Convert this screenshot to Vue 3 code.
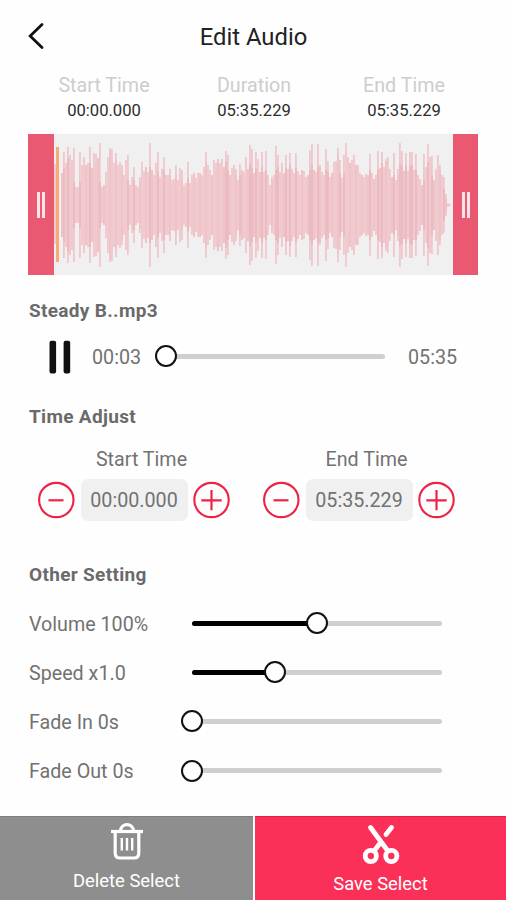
<script setup>
import { ref, computed } from 'vue'

const times = [
  { label: 'Start Time', value: '00:00.000' },
  { label: 'Duration', value: '05:35.229' },
  { label: 'End Time', value: '05:35.229' }
]

const adjusters = ref([
  { label: 'Start Time', value: '00:00.000' },
  { label: 'End Time', value: '05:35.229' }
])

const settings = ref([
  { label: 'Volume 100%', percent: 50 },
  { label: 'Speed x1.0', percent: 33.3 },
  { label: 'Fade In 0s', percent: 0 },
  { label: 'Fade Out 0s', percent: 0 }
])

// half height of every waveform bar
const peaks = [
  32, 53, 42, 58, 50, 45, 57, 18, 18, 53, 40, 48, 40, 42, 58, 37, 52, 51, 47, 62,
  18, 20, 33, 48, 57, 56, 42, 52, 40, 43, 40, 30, 45, 50, 20, 28, 38, 20, 18, 28,
  43, 34, 38, 33, 62, 35, 30, 42, 53, 28, 36, 48, 30, 30, 36, 25, 26, 40, 25,
  37, 35, 20, 22, 43, 22, 30, 32, 27, 32, 32, 30, 38, 53, 40, 35, 30, 45, 42, 46,
  42, 46, 38, 54, 50, 30, 37, 40, 36, 25, 41, 35, 33, 48, 36, 60, 56, 32, 53, 46,
  33, 53, 33, 54, 30, 20, 28, 30, 59, 50, 33, 42, 32, 50, 36, 52, 36, 32, 52, 34,
  30, 35, 34, 28, 30, 55, 61, 35, 33, 61, 40, 33, 30, 56, 44,
  28, 32, 43, 44, 57, 45, 27, 50, 62, 48, 42, 45, 50, 40, 40, 32, 30, 28, 31, 30,
  51, 32, 26, 30, 54, 37, 53, 38, 46, 48, 36, 28, 52, 25, 36, 62, 54, 34, 52, 34,
  53, 53, 35, 51, 30, 26, 20, 51, 38, 61, 48, 49, 25, 36, 50, 40, 30, 28, 11, 2, 1
]

// each bar has a solid body and a thinner spike that sticks out of it
const bars = computed(() =>
  peaks.map((peak, i) => {
    const low = Math.min(peak, peaks[i - 1] ?? peak, peaks[i + 1] ?? peak)
    const body = Math.min(peak, low + 5)
    const tone = peak - low > 15 ? 'strong' : i % 3 === 0 ? 'mid' : 'soft'
    return { x: 33 + i * 2, peak, body, tone }
  })
)
</script>

<template>
  <div class="page">
    <header class="header">
      <svg class="back" width="16" height="28" viewBox="0 0 16 28">
        <path d="M14 2.5 L2.2 14 L14 25.5" />
      </svg>
      <h1>Edit Audio</h1>
    </header>

    <section class="times">
      <div v-for="item in times" :key="item.label" class="time">
        <span class="time-label">{{ item.label }}</span>
        <span class="time-value">{{ item.value }}</span>
      </div>
    </section>

    <!-- waveform -->
    <section class="wave">
      <div class="handle"><i></i><i></i></div>
      <svg class="wave-bars" width="399" height="141" viewBox="26 0 399 141">
        <rect class="soft" x="26" y="30" width="2" height="80" />
        <g v-for="(bar, i) in bars" :key="i">
          <rect
            class="spike"
            :x="bar.x + 0.2"
            :y="71 - bar.peak"
            width="1.5"
            :height="bar.peak * 2"
          />
          <rect
            :class="bar.tone"
            :x="bar.x"
            :y="71 - bar.body"
            width="2"
            :height="bar.body * 2"
          />
        </g>
        <rect class="cursor" x="28" y="13" width="3" height="115" />
      </svg>
      <div class="handle right"><i></i><i></i></div>
    </section>

    <h2 class="file-name">Steady B..mp3</h2>

    <section class="player">
      <svg class="pause" width="22" height="34" viewBox="0 0 22 34">
        <rect x="0.5" y="0.8" width="6.6" height="32.6" rx="2" />
        <rect x="14.6" y="0.8" width="6.6" height="32.6" rx="2" />
      </svg>
      <span class="current">00:03</span>
      <div class="slider">
        <div class="knob"></div>
      </div>
      <span class="total">05:35</span>
    </section>

    <h2 class="adjust-title">Time Adjust</h2>

    <section class="adjusters">
      <div v-for="item in adjusters" :key="item.label" class="adjuster">
        <div class="adjust-label">{{ item.label }}</div>
        <div class="adjust-row">
          <svg class="round" width="38" height="38" viewBox="0 0 38 38">
            <circle cx="19.3" cy="19" r="17.2" />
            <path d="M11.5 19.3 H26.5" />
          </svg>
          <div class="adjust-value">{{ item.value }}</div>
          <svg class="round" width="38" height="38" viewBox="0 0 38 38">
            <circle cx="18.5" cy="19" r="17.2" />
            <path d="M8.3 19.3 H28.7 M18.5 9 V29.3" />
          </svg>
        </div>
      </div>
    </section>

    <h2 class="other-title">Other Setting</h2>

    <section class="settings">
      <div v-for="item in settings" :key="item.label" class="setting">
        <span class="setting-label">{{ item.label }}</span>
        <div class="slider">
          <div class="fill" :style="{ width: item.percent + '%' }"></div>
          <div class="knob" :style="{ left: item.percent + '%' }"></div>
        </div>
      </div>
    </section>

    <footer class="footer">
      <button class="action delete">
        <svg width="34" height="38" viewBox="0 0 34 38">
          <path d="M1 8.5 H33" />
          <path d="M10.5 8 C11 -0.5 23 -0.5 23.5 8" />
          <path d="M5.2 9 V30 Q5.2 35 10 35 H24 Q28.8 35 28.8 30 V9" />
          <path class="thin" d="M11.8 15 V27.5 M17 15 V27.5 M22.2 15 V27.5" />
        </svg>
        <span>Delete Select</span>
      </button>
      <button class="action save">
        <svg width="38" height="42" viewBox="0 0 38 42">
          <path d="M8.5 3.5 L25.5 26.5" />
          <path d="M29.5 3.5 L24 10.5" />
          <path d="M17 20.5 L12.5 26.5" />
          <circle cx="8.8" cy="32" r="5.6" />
          <circle cx="29.3" cy="32" r="5.6" />
        </svg>
        <span>Save Select</span>
      </button>
    </footer>
  </div>
</template>

<style>
body {
  margin: 0;
  background: #fefefe;
}
</style>

<style scoped>
.page {
  width: 506px;
  height: 900px;
  display: flex;
  flex-direction: column;
  overflow: hidden;
  background: #fefefe;
  color: #727272;
  font-family: Roboto, "Liberation Sans", sans-serif;
  font-size: 19.7px;
}

.header {
  height: 74px;
  display: grid;
  grid-template-columns: 60px 1fr 60px;
  align-items: center;
  box-sizing: border-box;
}

.back {
  margin-left: 28px;
  margin-top: -2px;
}

.back path {
  fill: none;
  stroke: #111;
  stroke-width: 2.8;
  stroke-linecap: round;
}

.header h1 {
  margin: 0;
  padding-left: 1px;
  color: #222;
  font-size: 23.8px;
  font-weight: 400;
  line-height: 28px;
  text-align: center;
}

.times {
  display: grid;
  grid-template-columns: repeat(3, 150px);
  margin-left: 29px;
  height: 60px;
}

.time {
  display: flex;
  flex-direction: column;
  align-items: center;
}

.time-label {
  line-height: 24px;
  color: #cdcdcd;
}

.time-value {
  font-size: 16.6px;
  line-height: 25px;
  color: #2c2c2c;
}

/* waveform */
.wave {
  display: flex;
  width: 450px;
  height: 141px;
  margin-left: 28px;
  background: #f0f0f0;
}

.handle {
  width: 26px;
  display: flex;
  align-items: center;
  justify-content: center;
  gap: 2px;
  background: #e95a72;
}

.handle.right {
  width: 25px;
}

.handle i {
  width: 3px;
  height: 26px;
  background: #fbe3e7;
}

.spike {
  fill: #efbfc6;
}

.soft {
  fill: #f0cace;
}

.mid {
  fill: #eec4c9;
}

.strong {
  fill: #ecbac1;
}

.cursor {
  fill: #f8ab78;
}

h2 {
  margin: 0 0 0 29px;
  color: #6a6a6a;
  font-size: 19px;
  font-weight: 700;
  letter-spacing: 0.32px;
  line-height: 24px;
}

.file-name {
  margin-top: 24px;
}

.player {
  display: flex;
  align-items: center;
  height: 40px;
  margin-top: 14px;
  padding-left: 49px;
}

.pause {
  fill: #111;
}

.current {
  width: 74px;
  margin-left: 21px;
}

.player .slider {
  width: 219px;
}

.total {
  margin-left: 23px;
}

.slider {
  position: relative;
  width: 250px;
  height: 5px;
  border-radius: 3px;
  background: #cfcfcf;
}

.player .slider {
  top: -1px;
}

.setting .slider {
  top: -0.5px;
}

.fill {
  height: 5px;
  border-radius: 3px;
  background: #000;
}

.knob {
  position: absolute;
  left: 0;
  top: 50%;
  width: 22px;
  height: 22px;
  box-sizing: border-box;
  border: 2.4px solid #111;
  border-radius: 50%;
  background: #fff;
  transform: translate(-50%, -50%);
}

.adjust-title {
  margin-top: 28px;
}

.adjusters {
  display: flex;
  gap: 31px;
  margin: 19px 0 0 37px;
}

.adjuster {
  width: 194px;
}

.adjust-label {
  padding-left: 15px;
  line-height: 24px;
  text-align: center;
}

.adjust-row {
  display: flex;
  align-items: center;
  justify-content: space-between;
  margin-top: 7px;
}

.adjust-value {
  width: 107px;
  height: 42px;
  border-radius: 7px;
  background: #f0f0f0;
  line-height: 43px;
  text-align: center;
}

.round {
  fill: none;
  stroke: #ee2346;
  stroke-width: 2.2;
}

.other-title {
  margin-top: 42px;
}

.settings {
  margin: 12px 0 0 29px;
}

.setting {
  display: flex;
  align-items: center;
  height: 49.2px;
}

.setting-label {
  width: 163px;
  padding-top: 1px;
}

/* bottom actions */
.footer {
  display: flex;
  gap: 2px;
  height: 84px;
  margin-top: auto;
}

.action {
  display: flex;
  flex-direction: column;
  align-items: center;
  box-sizing: border-box;
  height: 84px;
  padding: 0;
  border: none;
  color: #fff;
  font-family: inherit;
  font-size: 18.4px;
  line-height: 24px;
}

.delete {
  width: 253px;
  padding-top: 6px;
  border-top: 1px solid #7d7d7d;
  background: #8e8e8e;
}

.save {
  width: 251px;
  padding-top: 7px;
  border-top: 1px solid #e31f43;
  background: #fb3058;
}

.action svg {
  fill: none;
  stroke: #fff;
  stroke-width: 3.2;
}

.delete span {
  margin-top: 8px;
}

.save svg {
  stroke-width: 4.8;
  stroke-linecap: round;
}

.save span {
  margin-top: 6px;
}

.delete .thin {
  stroke-width: 2.4;
}
</style>
